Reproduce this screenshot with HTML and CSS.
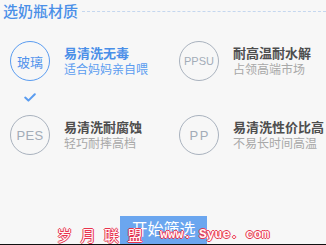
FILE: index.html
```html
<!DOCTYPE html>
<html lang="zh">
<head>
<meta charset="utf-8">
<link rel="stylesheet" href="styles.css">
</head>
<body>
<div class="page">
  <div class="header">
    <h2 class="title">选奶瓶材质</h2>
    <div class="rule"></div>
  </div>
  <div class="grid">
    <div class="item selected">
      <div class="badge-col">
        <div class="circle cn">玻璃</div>
        <svg class="check" width="12" height="9" viewBox="0 0 12 9"><path d="M1.2 4.6 L4.4 7.6 L10.8 1.2" fill="none" stroke="#5a9cf0" stroke-width="2" stroke-linecap="round" stroke-linejoin="round"/></svg>
      </div>
      <div class="text">
        <div class="name">易清洗无毒</div>
        <div class="desc">适合妈妈亲自喂</div>
      </div>
    </div>
    <div class="item">
      <div class="badge-col"><div class="circle en small">PPSU</div></div>
      <div class="text">
        <div class="name">耐高温耐水解</div>
        <div class="desc">占领高端市场</div>
      </div>
    </div>
    <div class="item">
      <div class="badge-col"><div class="circle en">PES</div></div>
      <div class="text">
        <div class="name">易清洗耐腐蚀</div>
        <div class="desc">轻巧耐摔高档</div>
      </div>
    </div>
    <div class="item">
      <div class="badge-col"><div class="circle en wide">PP</div></div>
      <div class="text">
        <div class="name">易清洗性价比高</div>
        <div class="desc">不易长时间高温</div>
      </div>
    </div>
  </div>
  <div class="actions">
    <button class="start">开始筛选</button>
  </div>
  <div class="watermark"><span class="wm-cn">岁月联盟</span><span class="wm-en">www. Syue. com</span></div>
  <div class="bottom-line"></div>
</div>
</body>
</html>
```
FILE: styles.css
```css
html, body {
  margin: 0;
  padding: 0;
  background: #f7f7f7;
}
.page {
  position: relative;
  width: 326px;
  height: 245px;
  overflow: hidden;
  font-family: "Noto Sans CJK SC", "Noto Sans", sans-serif;
}
.header {
  display: flex;
  align-items: center;
  height: 22px;
  padding-left: 3px;
}
.title {
  margin: 0;
  font-size: 15px;
  font-weight: 500;
  line-height: 22px;
  color: #4a8fe8;
}
.rule {
  flex: 1;
  margin-left: 4px;
  margin-top: 1px;
  border-top: 1px dashed #c5d7ef;
}
.grid {
  display: grid;
  grid-template-columns: 169px 147px;
  row-gap: 34px;
  padding: 19px 0 0 10px;
}
.item {
  display: flex;
  align-items: flex-start;
}
.badge-col {
  position: relative;
  width: 40px;
  height: 40px;
}
.circle {
  box-sizing: border-box;
  width: 40px;
  height: 40px;
  border-radius: 50%;
  border: 1.5px solid #a9b2be;
  display: flex;
  align-items: center;
  justify-content: center;
  color: #a3acb8;
}
.circle.cn {
  border-color: #5a9cf0;
  color: #4f92ec;
  font-size: 13px;
}
.circle.en {
  font-family: "Liberation Sans", Arial, sans-serif;
  font-size: 13px;
  letter-spacing: 0.3px;
}
.circle.en.small {
  font-size: 11px;
  letter-spacing: 0;
}
.circle.en.wide {
  letter-spacing: 1.5px;
  padding-left: 1.5px;
}
.check {
  position: absolute;
  left: 14px;
  top: 52px;
}
.text {
  margin-left: 14px;
  padding-top: 4px;
}
.name {
  font-size: 13px;
  font-weight: 700;
  line-height: 16px;
  height: 16px;
  color: #4e4e4e;
  white-space: nowrap;
}
.desc {
  font-size: 12px;
  line-height: 16px;
  height: 16px;
  color: #a8a8a8;
  white-space: nowrap;
}
.selected .name {
  color: #4a8fe8;
}
.selected .desc {
  color: #5a9cf0;
}
.actions {
  display: flex;
  justify-content: center;
  padding-top: 61px;
  padding-left: 1px;
}
.start {
  width: 87px;
  height: 40px;
  border: none;
  border-radius: 0;
  background: #6ba6ef;
  color: #ffffff;
  font-family: "Noto Sans CJK SC", sans-serif;
  font-size: 16px;
  line-height: 22px;
  padding: 0 0 16px 0;
}
.watermark {
  position: absolute;
  left: 57px;
  top: 226px;
  display: flex;
  align-items: center;
  white-space: nowrap;
}
.wm-cn, .wm-en {
  color: #fff6f6;
  line-height: 18px;
  text-shadow: 1px 0 0 #e8344e, -1px 0 0 #e8344e, 0 1px 0 #e8344e, 0 -1px 0 #e8344e;
}
.wm-cn {
  font-family: "Noto Sans CJK SC", sans-serif;
  font-size: 15px;
  font-weight: 400;
  letter-spacing: 8.5px;
}
.wm-en {
  margin-left: 9px;
  font-family: "Liberation Mono", monospace;
  font-size: 13px;
  font-weight: 700;
}
.bottom-line {
  position: absolute;
  left: 0;
  right: 0;
  bottom: 0;
  height: 1px;
  background: #111;
}
```
